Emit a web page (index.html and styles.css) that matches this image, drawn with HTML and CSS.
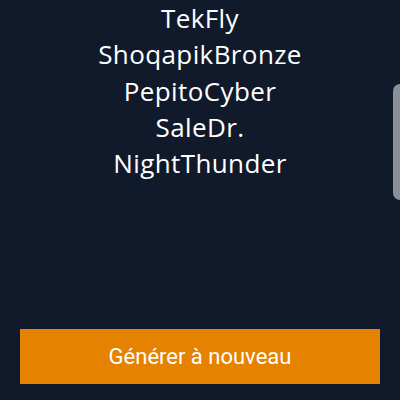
FILE: index.html
```html
<!DOCTYPE html>
<html lang="fr">
<head>
<meta charset="utf-8">
<link rel="stylesheet" href="styles.css">
</head>
<body>
<div class="page">
  <ul class="names">
    <li>TekFly</li>
    <li>ShoqapikBronze</li>
    <li>PepitoCyber</li>
    <li>SaleDr.</li>
    <li>NightThunder</li>
  </ul>
  <button class="regen">Générer à nouveau</button>
</div>
<div class="side-tab"></div>
</body>
</html>
```

FILE: styles.css
```css
html, body {
  margin: 0;
  padding: 0;
  width: 400px;
  height: 400px;
  overflow: hidden;
  background: #111a2b;
}
.page {
  display: flex;
  flex-direction: column;
  height: 400px;
  padding: 0 20px;
  box-sizing: border-box;
}
.names {
  list-style: none;
  margin: 0;
  padding: 0;
  text-align: center;
  font-family: "Open Sans", sans-serif;
  font-size: 26px;
  line-height: 36.25px;
  letter-spacing: 0.4px;
  color: #ffffff;
}
.regen {
  margin-top: auto;
  margin-bottom: 16px;
  height: 55px;
  width: 100%;
  border: none;
  background: #e58200;
  color: #ffffff;
  font-family: Roboto, sans-serif;
  font-size: 22px;
  padding: 0;
}
.side-tab {
  position: absolute;
  top: 84px;
  right: 0;
  width: 7px;
  height: 116px;
  background: #8a8f98;
  border-radius: 7px 0 0 7px;
}
```
